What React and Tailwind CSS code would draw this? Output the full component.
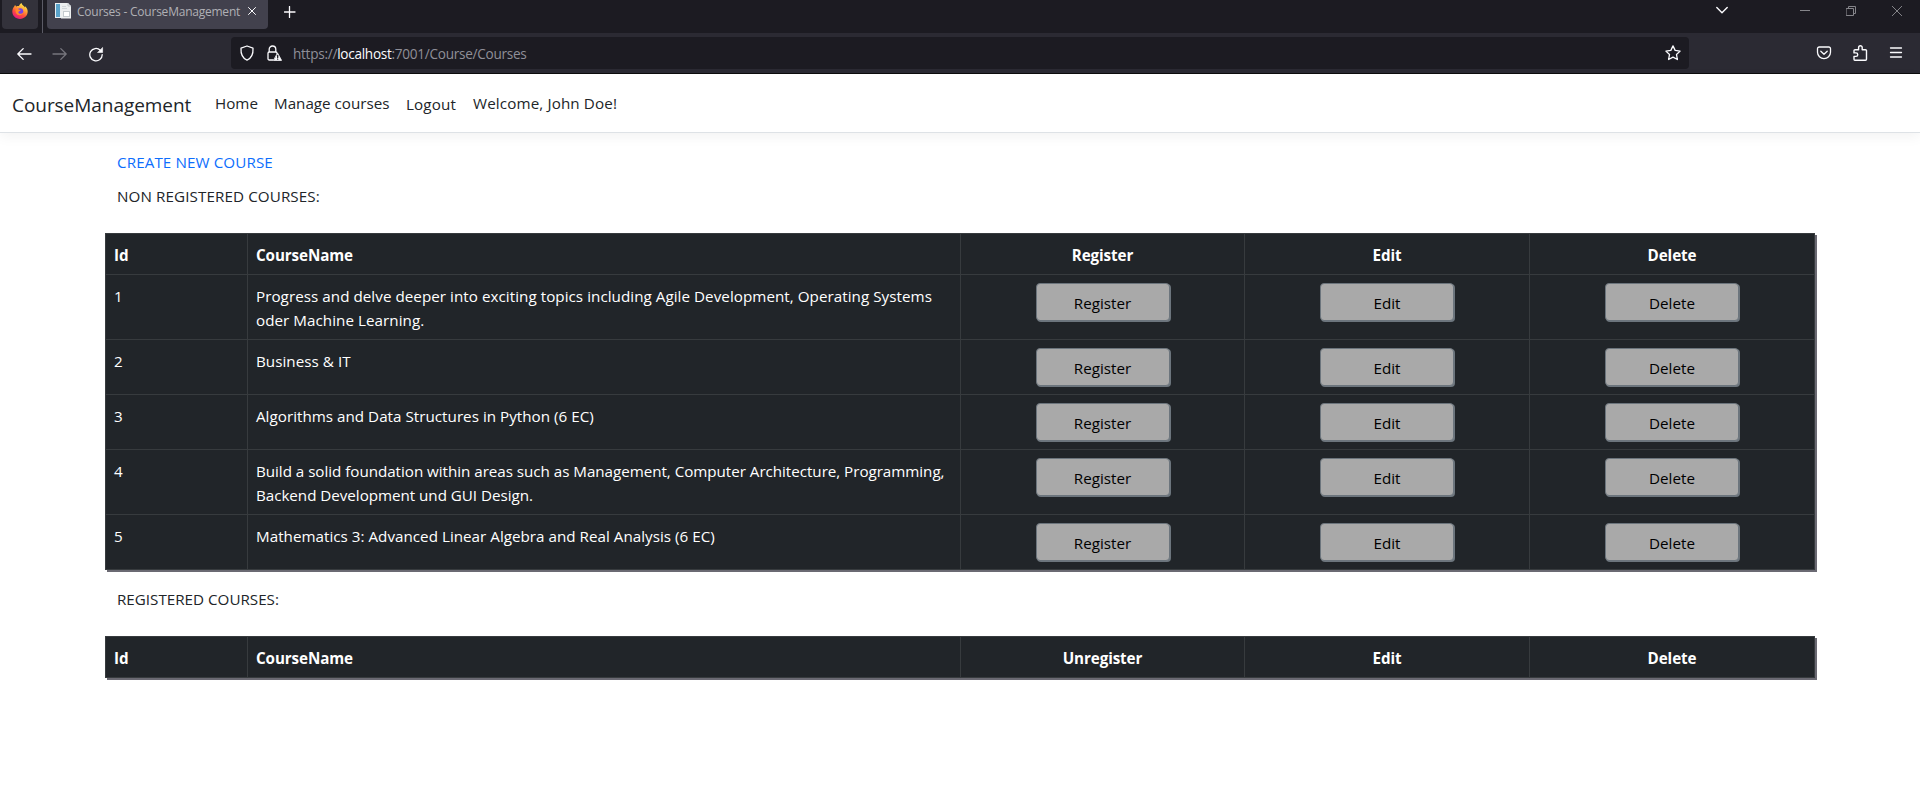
const courses = [
  { name: 'Progress and delve deeper into exciting topics including Agile Development, Operating Systems oder Machine Learning.', tracking: 'tracking-[0.045px]' },
  { name: 'Business & IT', tracking: 'tracking-[0.04px]' },
  { name: 'Algorithms and Data Structures in Python (6 EC)', tracking: 'tracking-[0.02px]' },
  { name: 'Build a solid foundation within areas such as Management, Computer Architecture, Programming, Backend Development und GUI Design.', tracking: 'tracking-[-0.035px]' },
  { name: 'Mathematics 3: Advanced Linear Algebra and Real Analysis (6 EC)', tracking: 'tracking-[0.02px]' },
];

function Firefox() {
  return (
    <svg width="16" height="16" viewBox="0 0 16 16">
      <defs>
        <linearGradient id="fx" x1="0.8" y1="0.05" x2="0.3" y2="1">
          <stop offset="0" stopColor="#fff44f" />
          <stop offset="0.35" stopColor="#ffa436" />
          <stop offset="0.65" stopColor="#ff4f3a" />
          <stop offset="1" stopColor="#e31587" />
        </linearGradient>
      </defs>
      <path d="M2.2 3.4C2.5 2.6 3 2.2 3.3 1.9c.1.8.5 1.4 1 1.7C5.400 3 6.300 3 7 3.100 7.400 1.900 8.500.7 9.600.100c.1 1.500 1.200 2.200 2.400 3.200C12.600 3.700 12.800 4.200 13 4.600c.2-.5.1-1-.2-1.500C14.700 4.400 15.700 6.600 15.700 8.600c0 4.200-3.400 7.300-7.700 7.300S.3 12.600.3 8.500C.3 6.500 1.100 4.700 2.200 3.400Z" fill="url(#fx)" />
      <circle cx="8.200" cy="8.300" r="3" fill="#7542e5" />
      <path d="M3.500 6.500c1.500-1 3-.6 4 .2 1 .2 1.300.6 1 1-.7.5-1.700.4-2.100 1.300-.2 1.100.7 1.800 1.900 1.800 1.400 0 2-.8 2.700-.8-.4 1.400-1.800 2.200-3.400 2.200-2.700 0-4.500-2.300-4.100-5.700Z" fill="#ff8a2b" />
    </svg>
  );
}

function Favicon() {
  return (
    <svg width="17" height="16" viewBox="0 0 17 16">
      <rect x="0" y="0" width="12" height="15" fill="#e9eef2" />
      <rect x="1" y="1" width="4" height="13" fill="#5aa3ca" />
      <path d="M6 0h7l3 3v12.500H6z" fill="#eceeef" />
      <path d="M13 0v3h3" fill="none" stroke="#c3c8cc" />
      <path d="M7 3.500h4M7 5.500h5" stroke="#d0d5d9" />
      <rect x="8.500" y="8.500" width="6" height="5" fill="#fff" stroke="#c4cace" />
    </svg>
  );
}

function Line({ d, w = 16, h = 16, color = '#fbfbfe', sw = 1.3, children }) {
  return (
    <svg width={w} height={h} viewBox={`0 0 ${w} ${h}`} fill="none" stroke={color} strokeWidth={sw} strokeLinecap="round" strokeLinejoin="round">
      <path d={d} />
      {children}
    </svg>
  );
}

function TabStrip() {
  return (
    <div className="flex h-[33px] items-start bg-[#1c1b22]">
      <div className="ml-[2px] flex h-[29px] w-9 justify-center rounded-b bg-[#33323b] pt-[3px]"><Firefox /></div>
      <div className="ml-1 h-[33px] w-px bg-[#5b5b66]" />
      <div className="ml-1 flex h-[29px] w-[221px] items-start rounded-b bg-[#42414d] pl-2">
        <div className="w-[22px] pt-[3px]"><Favicon /></div>
        <div className="w-[166px] whitespace-nowrap text-[12px] leading-6 tracking-[-0.23px] text-[#b0b0b5]">Courses - CourseManagement</div>
        <div className="pl-[5px] pt-[7px]"><Line w={8} h={8} sw={1} d="M.5.5l7 7M7.500.5l-7 7" /></div>
      </div>
      <div className="ml-4 pt-[6px]"><Line w={12} h={12} d="M5.500 .5v11M.5 6h10.500" /></div>
      <div className="ml-auto flex items-start pr-[18px]">
        <div className="pt-[6px]"><Line w={12} h={9} sw={1.4} d="M.8 1.500L6 6.700l5.200-5.200" /></div>
        <div className="pl-[72px] pt-[10px]"><div className="h-px w-[10px] bg-[#85858a]" /></div>
        <div className="pl-9 pt-[6px]"><Line w={10} h={10} sw={1} color="#85858a" d="M.5 2.500h7v7h-7zM2.500 2.500V.5h7v7H7.500" /></div>
        <div className="pl-9 pt-[6px]"><Line w={10} h={10} sw={1} color="#85858a" d="M.3.3l9.400 9.400M9.700.3L.3 9.700" /></div>
      </div>
    </div>
  );
}

function Toolbar() {
  return (
    <div className="flex h-[41px] items-center border-b border-[#0c0c0d] bg-[#2b2a33]">
      <div className="pl-4 pt-px"><Line d="M15 8H1.800M7.200 2.600L1.800 8l5.400 5.400" /></div>
      <div className="pl-5 pt-px"><Line color="#77767e" d="M1 8h13.200M8.800 2.600L14.200 8l-5.400 5.400" /></div>
      <div className="pl-5 pt-px">
        <Line d="M12.300 4.200A6.200 6.200 0 1 0 14.200 8.600">
          <path d="M14.600 1.800v4.700H9.900z" fill="#fbfbfe" strokeWidth="0.600" />
        </Line>
      </div>
      <div className="ml-[127px] flex h-8 w-[1458px] items-center rounded bg-[#1c1b22] pl-2">
        <Line d="M8 1L14 3.200C14.300 8 12.700 13 8 15.100 3.300 13 1.700 8 2 3.200Z" />
        <div className="pl-[11px]">
          <Line d="M7 15H3.200A1.200 1.200 0 0 1 2 13.800V8.200A1.200 1.200 0 0 1 3.200 7h6.600A1.200 1.200 0 0 1 11 8.200M3.200 6.700V4.300a3.300 3.300 0 0 1 6.600 0v2.400">
            <path d="M11.700 8.300l3.900 7.100H7.800z" fill="#fbfbfe" strokeWidth="0.800" />
            <path d="M11.700 10.500v2.100M11.700 14.100v.1" stroke="#1c1b22" />
          </Line>
        </div>
        <div className="pl-[11px] pt-[2px] text-[13.6px] leading-[30px] tracking-[-0.28px] text-[#8f8f98]">https://<span className="text-[#fbfbfe]">localhost</span>:7001/Course/Courses</div>
        <div className="ml-auto pr-2">
          <Line d="M8 .9l2.150 4.500 4.950.7-3.600 3.450.9 4.950L8 12.100l-4.400 2.400.9-4.950L.9 6.100l4.950-.7z" />
        </div>
      </div>
      <div className="ml-auto flex items-center gap-5 pr-4">
        <Line d="M3.200 2h9.600a1.700 1.700 0 0 1 1.700 1.700v3.600c0 3.500-2.900 6.300-6.500 6.300S1.500 10.800 1.500 7.300V3.700A1.700 1.700 0 0 1 3.200 2zM4.800 6.200L8 9.200l3.200-3" />
        <Line sw={1.4} d="M2.800 15.200h10.700a1 1 0 0 0 1-1V5.700a1 1 0 0 0-1-1H10.200V2.600a1.800 1.800 0 0 0-3.600 0v2.100H3a1 1 0 0 0-1 1v2.200h2a1.700 1.700 0 0 1 0 3.500H2v2.800c0 .6.200 1 .8 1z" />
        <Line d="M2.500 3h11M2.500 7.500h11M2.500 12h11" />
      </div>
    </div>
  );
}

function CourseTable({ action, rows }) {
  const cell = 'border border-[#373b3e] px-2';
  const text = 'pt-[9px] pb-[7px]';
  return (
    <table className="w-[1709px] table-fixed border-collapse bg-[#212529] text-[15.2px] leading-6 text-white shadow-[2px_2px_0_#6b6a73]">
      <colgroup>
        <col className="w-[142px]" />
        <col className="w-[713px]" />
        <col className="w-[284px]" />
        <col className="w-[285px]" />
        <col className="w-[285px]" />
      </colgroup>
      <thead>
        <tr>
          <th className={`${cell} ${text} text-left`}>Id</th>
          <th className={`${cell} ${text} text-left tracking-[-0.1px]`}>CourseName</th>
          {[action, 'Edit', 'Delete'].map((t) => <th key={t} className={`${cell} ${text} tracking-[-0.1px]`}>{t}</th>)}
        </tr>
      </thead>
      <tbody>
        {rows.map(({ name, tracking }, i) => (
          <tr key={name} className="align-top">
            <td className={`${cell} ${text}`}>{i + 1}</td>
            <td className={`${cell} ${text} ${tracking}`}>{name}</td>
            {[action, 'Edit', 'Delete'].map((t) => (
              <td key={t} className={`${cell} py-2`}>
                <button className="mx-auto block h-[38px] w-[134px] rounded border border-[#6c757d] bg-[#a9a9a9] pt-px text-black shadow-[1px_1px_0_#6c757d]">{t}</button>
              </td>
            ))}
          </tr>
        ))}
      </tbody>
    </table>
  );
}

export default function App() {
  return (
    <div className="h-[799px] w-[1920px] overflow-hidden bg-white font-['Open_Sans',sans-serif] text-[15.2px] leading-6 text-[#212529]">
      <TabStrip />
      <Toolbar />
      <nav className="flex h-[59px] items-start border-b border-[#dee2e6] pl-3 pt-[17px] shadow-[0_4px_12px_rgba(0,0,0,0.05)]">
        <div className="w-[203px] pt-[2px] text-[19px] tracking-[-0.05px]">CourseManagement</div>
        <div className="w-[59px]">Home</div>
        <div className="w-[132px]">Manage courses</div>
        <div className="w-[67px] pt-px tracking-[0.15px]">Logout</div>
        <div className="tracking-[0.13px]">Welcome, John Doe!</div>
      </nav>
      <main className="pl-[105px]">
        <div className="pl-3 pt-[17px] tracking-[0.1px] text-[#0d6efd]">CREATE NEW COURSE</div>
        <div className="pl-3 pt-[10px] tracking-[0.1px]">NON REGISTERED COURSES:</div>
        <div className="pt-[25px]"><CourseTable action="Register" rows={courses} /></div>
        <div className="pl-3 pt-[17px]">REGISTERED COURSES:</div>
        <div className="pt-[25px]"><CourseTable action="Unregister" rows={[]} /></div>
      </main>
    </div>
  );
}
